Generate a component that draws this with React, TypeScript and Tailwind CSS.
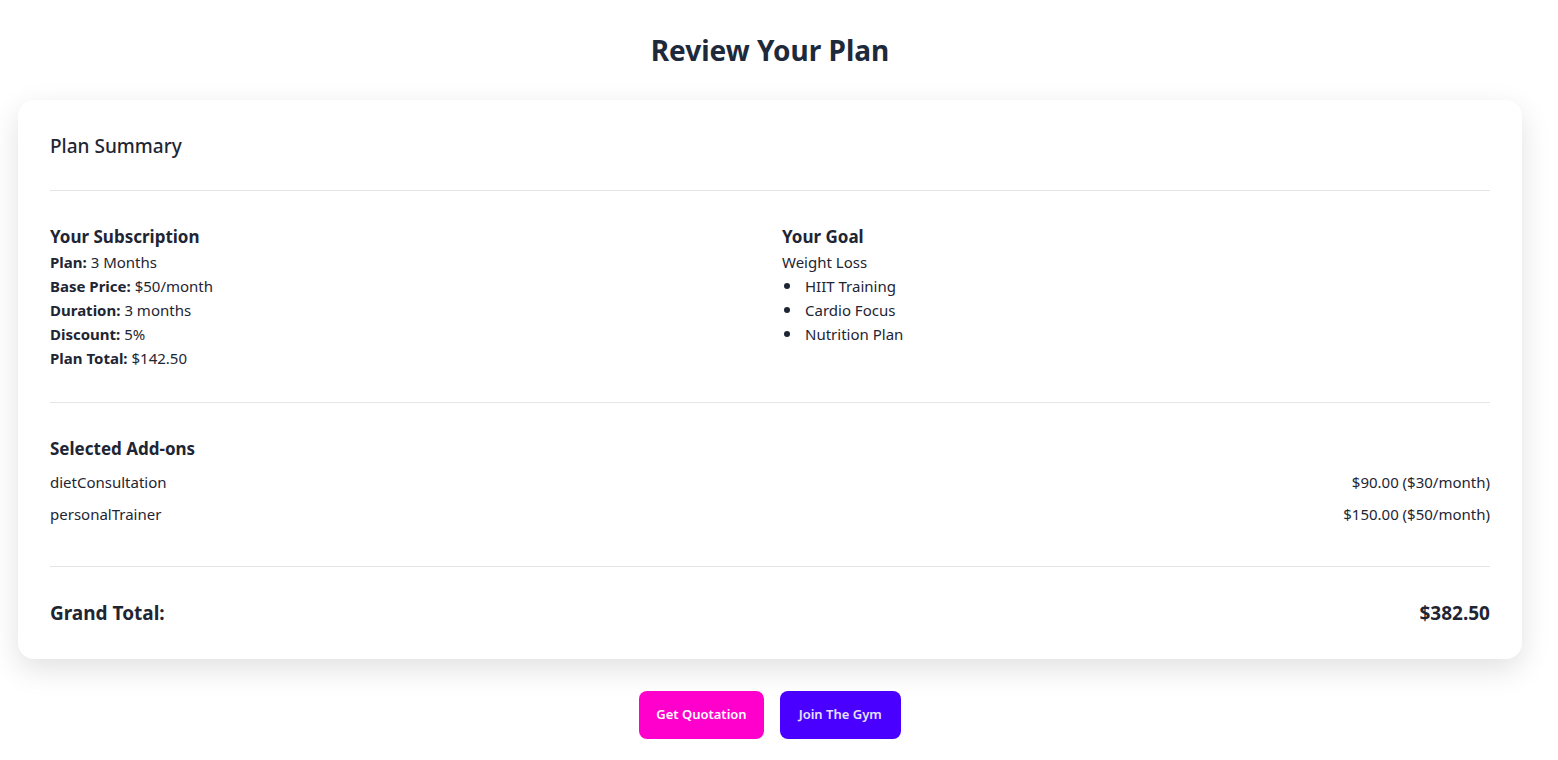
const subscription = [
  { label: "Plan:", value: "3 Months" },
  { label: "Base Price:", value: "$50/month" },
  { label: "Duration:", value: "3 months" },
  { label: "Discount:", value: "5%" },
  { label: "Plan Total:", value: "$142.50" },
];

const goalItems = ["HIIT Training", "Cardio Focus", "Nutrition Plan"];

const addOns = [
  { name: "dietConsultation", price: "$90.00 ($30/month)" },
  { name: "personalTrainer", price: "$150.00 ($50/month)" },
];

export default function App() {
  return (
    <div className="min-h-screen bg-white font-['Noto_Sans',sans-serif] text-[#1e2533]">
      <div className="max-w-[1540px] px-[18px] pt-8 pb-6">
        <h1 className="text-center text-[28px] font-bold leading-9 text-[#1e2a3b]">
          Review Your Plan
        </h1>

        {/* card */}
        <div className="mt-8 rounded-2xl bg-white px-8 shadow-[0_10px_30px_rgba(0,0,0,0.12)]">
          <div className="border-b border-[#e5e5e5] pt-8 pb-[30px]">
            <h2 className="text-[19px] font-medium leading-7 text-[#1e2533]">Plan Summary</h2>
          </div>

          {/* subscription + goal */}
          <div className="grid grid-cols-2 gap-6 border-b border-[#e5e5e5] pt-[33px] pb-8">
            <div>
              <h3 className="text-[17px] font-bold leading-[26px]">Your Subscription</h3>
              {subscription.map((row) => (
                <p key={row.label} className="text-[15px] leading-6">
                  <span className="font-bold">{row.label}</span> {row.value}
                </p>
              ))}
            </div>
            <div>
              <h3 className="text-[17px] font-bold leading-[26px]">Your Goal</h3>
              <p className="text-[15px] leading-6">Weight Loss</p>
              <ul>
                {goalItems.map((item) => (
                  <li key={item} className="flex items-center text-[15px] leading-6">
                    <span className="ml-[2px] h-[6px] w-[6px] rounded-full bg-[#1e2533]" />
                    <span className="ml-[15px]">{item}</span>
                  </li>
                ))}
              </ul>
            </div>
          </div>

          {/* add-ons */}
          <div className="border-b border-[#e5e5e5] pt-8 pb-[36px]">
            <h3 className="text-[17px] font-bold leading-7">Selected Add-ons</h3>
            <div className="mt-[3px]">
              {addOns.map((a) => (
                <div key={a.name} className="flex justify-between py-1 text-[15px] leading-6">
                  <span>{a.name}</span>
                  <span>{a.price}</span>
                </div>
              ))}
            </div>
          </div>

          {/* grand total */}
          <div className="flex items-center justify-between py-8 text-[19px] font-bold leading-7">
            <span>Grand Total:</span>
            <span>$382.50</span>
          </div>
        </div>

        {/* actions */}
        <div className="mt-8 flex justify-center gap-4">
          <button
            type="button"
            className="h-12 rounded-lg bg-[#ff00cc] px-[17px] text-[13px] font-semibold text-white"
          >
            Get Quotation
          </button>
          <button
            type="button"
            className="h-12 rounded-lg bg-[#4a00ff] px-[19px] text-[13px] font-semibold text-[#e6e0ff]"
          >
            Join The Gym
          </button>
        </div>
      </div>
    </div>
  );
}
